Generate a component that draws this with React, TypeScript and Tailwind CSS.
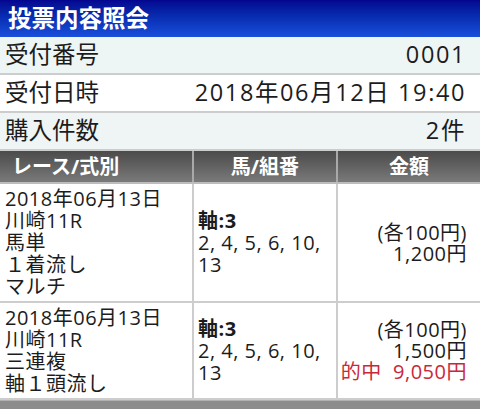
import React from "react";

const font = { fontFamily: '"Open Sans", "Noto Sans CJK JP", sans-serif' };

const summary = [
  { label: "受付番号", value: "0001", bg: "bg-[#eef5f5]" },
  { label: "受付日時", value: "2018年06月12日 19:40", bg: "bg-white" },
  { label: "購入件数", value: "2件", bg: "bg-[#eff4f4]" },
];

const bets = [
  {
    race: ["2018年06月13日", "川崎11R", "馬単", "１着流し", "マルチ"],
    axis: "軸:3",
    combos: ["2, 4, 5, 6, 10,", "13"],
    unit: "(各100円)",
    total: "1,200円",
    hit: null as string | null,
  },
  {
    race: ["2018年06月13日", "川崎11R", "三連複", "軸１頭流し"],
    axis: "軸:3",
    combos: ["2, 4, 5, 6, 10,", "13"],
    unit: "(各100円)",
    total: "1,500円",
    hit: "的中\u00a0\u00a09,050円",
  },
];

const headCell =
  "h-[33px] flex items-center text-white font-bold text-[20px] bg-gradient-to-b from-[#4b4b4b] to-[#7a7a7a] border-b-2 border-[#bdbdbd]";

export default function App() {
  return (
    <div className="w-[480px] h-[409px] overflow-hidden bg-white text-[#1c1c1c]" style={font}>
      {/* title bar */}
      <div className="h-[37px] flex items-center px-2 bg-gradient-to-b from-[#05058f] to-[#1a4fdc]">
        <h1 className="text-white font-bold text-[23.5px] leading-none">投票内容照会</h1>
      </div>

      {summary.map((row) => (
        <div
          key={row.label}
          className={`h-[38px] flex items-center justify-between pl-[5px] pr-[14px] border-b-2 border-[#cdcdcd] text-[23.5px] ${row.bg}`}
        >
          <span>{row.label}</span>
          <span className="tracking-[1.6px] whitespace-pre">{row.value}</span>
        </div>
      ))}

      {/* bet table */}
      <div className="grid grid-cols-[192px_2px_142px_2px_1fr]">
        <div className={`${headCell} pl-3`}>レース/式別</div>
        <div className="bg-[#a9a9a9] border-b-2 border-[#bdbdbd]" />
        <div className={`${headCell} justify-center`}>馬/組番</div>
        <div className="bg-[#a9a9a9] border-b-2 border-[#bdbdbd]" />
        <div className={`${headCell} justify-center`}>金額</div>

        {bets.map((bet, i) => (
          <React.Fragment key={i}>
            <div className="pl-[5px] pt-[4px] pb-[3px] text-[20px] leading-[22px] tracking-[0.5px] border-b-2 border-[#cdcdcd]">
              {bet.race.map((line) => (
                <div key={line}>{line}</div>
              ))}
            </div>
            <div className="bg-[#cdcdcd]" />
            <div className="pl-[4px] flex flex-col justify-center text-[20px] leading-[22px] tracking-[0.5px] border-b-2 border-[#cdcdcd]">
              <div className="font-bold">{bet.axis}</div>
              {bet.combos.map((line) => (
                <div key={line}>{line}</div>
              ))}
            </div>
            <div className="bg-[#cdcdcd]" />
            <div className="pr-[13px] flex flex-col justify-center items-end text-[20px] leading-[21px] tracking-[0.5px] border-b-2 border-[#cdcdcd]">
              <div>{bet.unit}</div>
              <div>{bet.total}</div>
              {bet.hit && <div className="text-[#c9283a]">{bet.hit}</div>}
            </div>
          </React.Fragment>
        ))}
      </div>

      <div className="h-[10px] bg-[#8c8c8c] border-t border-[#b0b0b0]" />
    </div>
  );
}
